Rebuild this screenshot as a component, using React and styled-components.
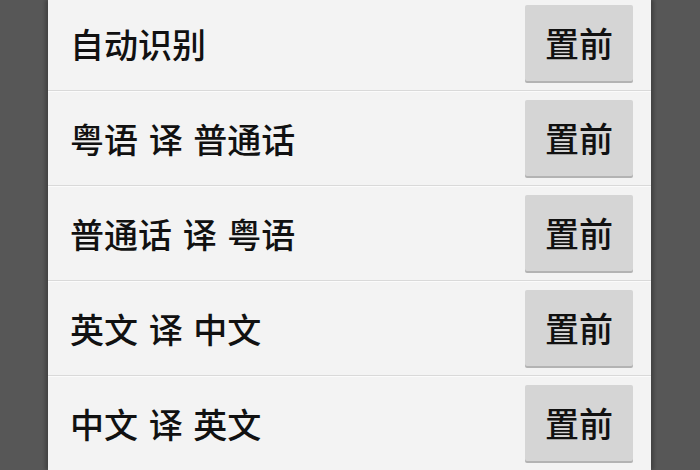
import React from "react";
import styled, { createGlobalStyle } from "styled-components";

const GlobalStyle = createGlobalStyle`
  html, body {
    margin: 0;
    padding: 0;
    background: #575757;
    overflow: hidden;
  }
  body {
    font-family: "Noto Sans CJK SC", "Noto Sans", sans-serif;
  }
`;

const Screen = styled.div`
  width: 700px;
  height: 470px;
  box-sizing: border-box;
  padding-left: 48px;
  background: #575757;
  display: flex;
  overflow: hidden;
`;

const Panel = styled.div`
  width: 603px;
  background: #f3f3f3;
  box-shadow: -3px 0 3px rgba(0, 0, 0, 0.22), 3px 0 3px rgba(0, 0, 0, 0.22);
`;

const List = styled.ul`
  list-style: none;
  margin: -4px 0 0 0;
  padding: 0;
`;

const Row = styled.li`
  height: 94px;
  display: flex;
  align-items: center;
  justify-content: space-between;
  padding: 0 18px 0 22px;
  border-bottom: 1px solid #d9d9d9;
  box-shadow: 0 1px 0 #fbfbfb;
`;

const Label = styled.span`
  font-size: 34px;
  font-weight: 500;
  word-spacing: 3px;
  color: #111;
  white-space: pre;
`;

const FrontButton = styled.button`
  width: 108px;
  height: 76px;
  border: none;
  border-radius: 2px;
  background: #d5d5d5;
  box-shadow: 0 2px 0 #b3b3b3;
  font-family: inherit;
  font-size: 34px;
  font-weight: 500;
  color: #111;
  padding: 0;
  margin-top: -1px;
`;

const languages = [
  "自动识别",
  "粤语 译 普通话",
  "普通话 译 粤语",
  "英文 译 中文",
  "中文 译 英文",
];

export default function App() {
  return (
    <Screen>
      <GlobalStyle />
      <Panel>
        <List>
          {languages.map((name) => (
            <Row key={name}>
              <Label>{name}</Label>
              <FrontButton>置前</FrontButton>
            </Row>
          ))}
        </List>
      </Panel>
    </Screen>
  );
}
